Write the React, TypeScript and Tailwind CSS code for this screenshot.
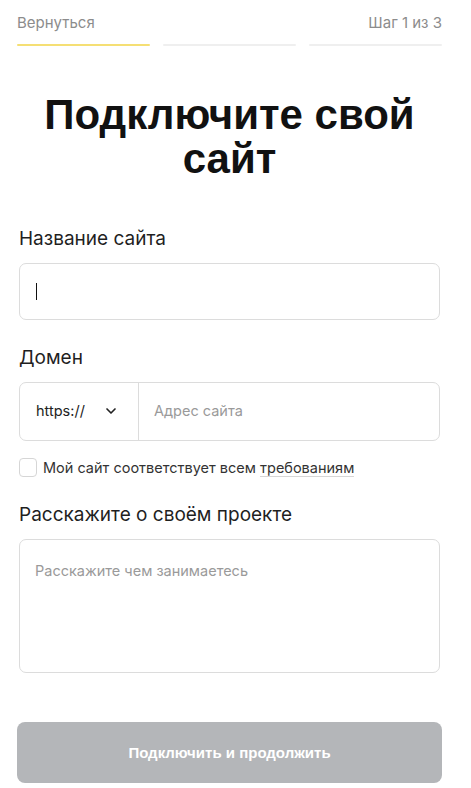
import { ChevronDown } from "lucide-react";

const STEPS = [true, false, false];

export default function App() {
  return (
    <div className="min-h-[788px] bg-white pl-[17px] pr-[29px] font-['Inter',sans-serif] text-[#1f1f1f]">
      {/* Header with progress */}
      <div className="flex items-center justify-between pt-[12px] text-[15px] text-[#8c8c8c]">
        <span>Вернуться</span>
        <span>Шаг 1 из 3</span>
      </div>
      <div className="mt-[9px] grid grid-cols-3 gap-[13px]">
        {STEPS.map((active, i) => (
          <div
            key={i}
            className={active ? "h-[2px] rounded-full bg-[#f5df74]" : "h-[2px] rounded-full bg-[#efefef]"}
          />
        ))}
      </div>

      <h1 className="mt-[47px] text-center font-['Liberation_Sans',Arial,sans-serif] text-[42px] font-bold leading-[44px] text-[#111]">
        Подключите свой сайт
      </h1>

      <div className="px-[2px]">
        <label className="mt-[46px] block text-[19px] leading-[24px]">Название сайта</label>
        <div className="mt-[12px] flex h-[57px] items-center rounded-[7px] border border-[#dcdcdc] px-[16px]">
          <div className="h-[17px] w-px bg-[#111]" />
        </div>

        <label className="mt-[26px] block text-[19px] leading-[24px]">Домен</label>
        <div className="mt-[12px] flex h-[59px] rounded-[7px] border border-[#dcdcdc]">
          <div className="flex w-[119px] items-center justify-between border-r border-[#dcdcdc] pl-[16px] pr-[19px] text-[14.5px] text-[#222]">
            <span>https://</span>
            <ChevronDown className="h-[16px] w-[16px]" strokeWidth={2.5} />
          </div>
          <div className="flex items-center pl-[15px] text-[14.5px] text-[#9a9a9a]">Адрес сайта</div>
        </div>

        <div className="mt-[16px] flex items-center gap-[6px] text-[14.5px] text-[#333]">
          <div className="h-[19px] w-[18px] rounded-[4px] border border-[#d6d6d6]" />
          <span>
            Мой сайт соответствует всем{" "}
            <span className="border-b border-[#d6d6d6]">требованиям</span>
          </span>
        </div>

        <label className="mt-[25px] block text-[19px] leading-[24px]">Расскажите о своём проекте</label>
        <div className="mt-[12px] h-[134px] rounded-[7px] border border-[#dcdcdc] px-[15px] pt-[20px] text-[14.5px] text-[#9a9a9a]">
          Расскажите чем занимаетесь
        </div>
      </div>

      <button className="mt-[49px] flex h-[61px] w-full items-center justify-center rounded-[8px] bg-[#b4b6b9] font-['Liberation_Sans',Arial,sans-serif] text-[15px] font-bold text-white">
        Подключить и продолжить
      </button>
    </div>
  );
}
